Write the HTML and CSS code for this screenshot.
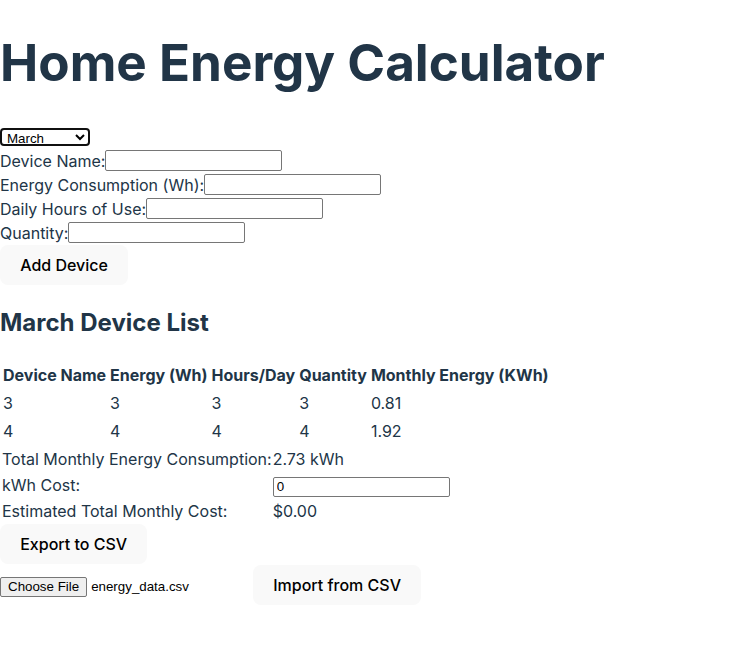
FILE: index.html
```html
<!DOCTYPE html>
<html lang="en">
<head>
<meta charset="utf-8">
<title>Home Energy Calculator</title>
<link rel="stylesheet" href="styles.css">
</head>
<body>
<div class="app">
  <h1 class="title">Home Energy Calculator</h1>
  <div class="month-row">
    <select class="month-select">
      <option>January</option>
      <option>February</option>
      <option selected>March</option>
      <option>April</option>
    </select>
  </div>
  <div class="field"><label>Device Name:</label><input class="text-input" type="text"></div>
  <div class="field"><label>Energy Consumption (Wh):</label><input class="text-input" type="text"></div>
  <div class="field"><label>Daily Hours of Use:</label><input class="text-input" type="text"></div>
  <div class="field"><label>Quantity:</label><input class="text-input" type="text"></div>
  <button class="btn" type="button">Add Device</button>

  <h2 class="subtitle">March Device List</h2>
  <table class="devices">
    <thead>
      <tr><th>Device Name</th><th>Energy (Wh)</th><th>Hours/Day</th><th>Quantity</th><th>Monthly Energy (KWh)</th></tr>
    </thead>
    <tbody>
      <tr><td>3</td><td>3</td><td>3</td><td>3</td><td>0.81</td></tr>
      <tr><td>4</td><td>4</td><td>4</td><td>4</td><td>1.92</td></tr>
    </tbody>
  </table>
  <table class="summary">
    <tr><td class="sum-label">Total Monthly Energy Consumption:</td><td class="sum-value">2.73 kWh</td></tr>
    <tr><td class="sum-label">kWh Cost:</td><td class="sum-value"><input class="text-input cost-input" type="text" value="0"></td></tr>
    <tr><td class="sum-label">Estimated Total Monthly Cost:</td><td class="sum-value">$0.00</td></tr>
  </table>
  <div class="export-row"><button class="btn" type="button">Export to CSV</button></div>
  <div class="import-row">
    <span class="file-input"><span class="file-btn">Choose File</span><span class="file-name">energy_data.csv</span></span>
    <button class="btn" type="button">Import from CSV</button>
  </div>
</div>
</body>
</html>
```
FILE: styles.css
```css
html, body {
  margin: 0;
  padding: 0;
  background: #ffffff;
}
body {
  font-family: Inter, "Noto Sans", sans-serif;
  font-size: 16px;
  line-height: 1.5;
  font-weight: 400;
  color: #213547;
}
.title {
  font-size: 51.2px;
  line-height: 1.1;
  font-weight: 700;
  margin: 34.3px 0;
}
.month-row {
  height: 24px;
  display: flex;
  align-items: flex-end;
}
.month-select {
  box-sizing: border-box;
  width: 90px;
  height: 18px;
  margin: 0 0 3px 0;
  font-family: "Liberation Sans", Arial, sans-serif;
  font-size: 13.33px;
  color: #000;
  background: #fff;
  border: 2px solid #101010;
  border-radius: 4px;
  padding: 0 0 0 1px;
}
.field {
  height: 24px;
  display: flex;
  align-items: center;
}
.field label {
  line-height: 24px;
}
.text-input {
  box-sizing: border-box;
  width: 177px;
  height: 21px;
  margin: 0;
  padding: 1px 3px;
  border: 1px solid #767676;
  border-radius: 2px;
  font-family: "Liberation Sans", Arial, sans-serif;
  font-size: 13.33px;
  color: #000;
  background: #fff;
}
.field .text-input {
  margin-top: -1px;
}
.btn {
  border-radius: 8px;
  border: 1px solid transparent;
  padding: 0.6em 1.2em;
  font-size: 16px;
  line-height: 19px;
  font-weight: 500;
  font-family: Inter, "Noto Sans", sans-serif;
  background-color: #f9f9f9;
  color: #000;
  cursor: pointer;
}
.subtitle {
  font-size: 24px;
  line-height: 36px;
  font-weight: 700;
  margin: 20px 0 19px 0;
}
.devices {
  border-spacing: 2px;
}
.devices th, .devices td {
  padding: 1px;
  text-align: left;
}
.devices th {
  font-weight: 700;
}
.summary {
  border-spacing: 0;
}
.summary td {
  height: 24px;
}
.summary .sum-label {
  padding: 1px 0 1px 2px;
}
.summary .sum-value {
  padding: 1px 1px 1px 1px;
}
.cost-input {
  height: 20px;
}
.export-row {
  display: flex;
}
.import-row {
  display: flex;
  align-items: center;
  margin-top: 1px;
}
.file-input {
  width: 253px;
  margin-top: 4px;
  display: flex;
  align-items: center;
  font-family: "Liberation Sans", Arial, sans-serif;
  font-size: 13.33px;
  line-height: 16px;
  color: #000;
}
.file-btn {
  box-sizing: border-box;
  height: 20px;
  padding: 1px 7px;
  background: #efefef;
  border: 1px solid #767676;
  border-radius: 2px;
  margin-right: 4px;
}
```
